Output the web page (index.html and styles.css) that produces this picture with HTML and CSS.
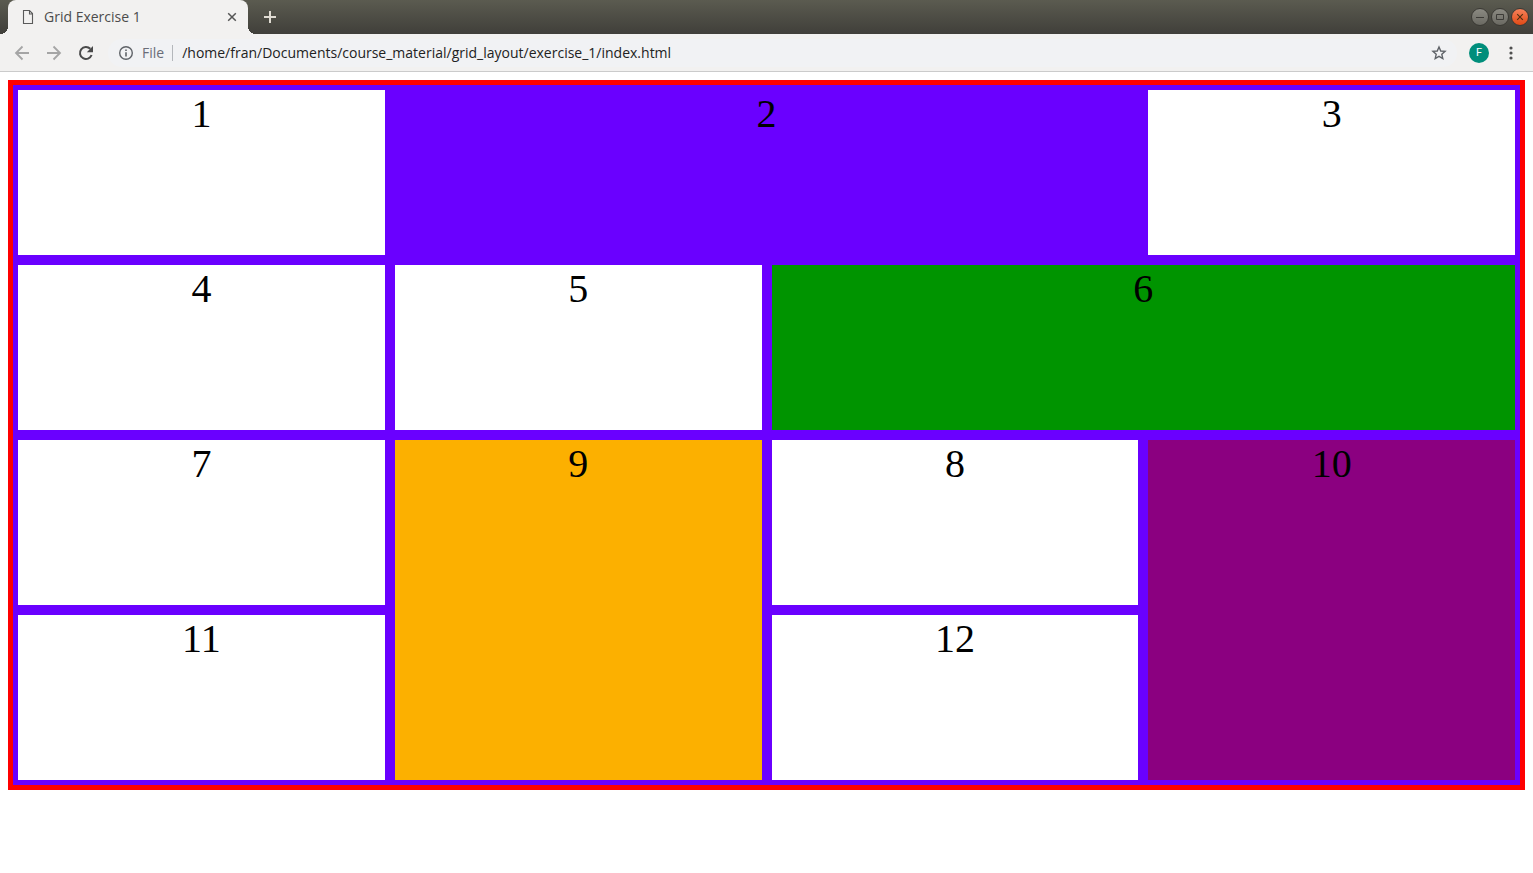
FILE: index.html
```html
<!DOCTYPE html>
<html lang="en">
<head>
<meta charset="utf-8">
<title>Grid Exercise 1</title>
<link rel="stylesheet" href="styles.css">
</head>
<body>
<header class="browser">
  <div class="titlebar">
    <div class="tab">
      <svg class="icon" width="16" height="16" viewBox="0 0 16 16" fill="none" stroke="#5a5a5a" stroke-width="1.1"><path d="M3.500 1.500h6l3 3v10h-9zM9.500 1.500v3.500h3"/></svg>
      <span class="tab-title">Grid Exercise 1</span>
      <button class="tab-close" type="button" aria-label="Close tab"><svg width="16" height="16" viewBox="0 0 16 16" stroke="#555" stroke-width="1.500"><path d="M4.200 4.200l7.600 7.600M11.800 4.200l-7.600 7.600"/></svg></button>
    </div>
    <button class="new-tab" type="button" aria-label="New tab"><svg width="16" height="16" viewBox="0 0 16 16" stroke="#dfdbd2" stroke-width="2"><path d="M2 8h12M8 2v12"/></svg></button>
    <div class="window-controls">
      <button class="window-button" type="button" aria-label="Minimize"><svg width="16" height="16" viewBox="0 0 16 16" stroke="#3c3b37"><path d="M4 8.500h8"/></svg></button>
      <button class="window-button" type="button" aria-label="Maximize"><svg width="16" height="16" viewBox="0 0 16 16" fill="none" stroke="#3c3b37"><path d="M4.500 5.500h7v5h-7z"/></svg></button>
      <button class="window-button window-button-close" type="button" aria-label="Close"><svg width="16" height="16" viewBox="0 0 16 16" stroke="#4b2f12" stroke-width="1.100"><path d="M5.200 5.200l5.600 5.600M10.800 5.200l-5.600 5.600"/></svg></button>
    </div>
  </div>
  <div class="toolbar">
    <div class="nav">
      <button class="tool" type="button" aria-label="Back"><svg width="20" height="20" viewBox="0 0 20 20" fill="none" stroke="#a5a5a5" stroke-width="1.800"><path d="M17 10H4M10.500 3.500L4 10l6.500 6.500"/></svg></button>
      <button class="tool" type="button" aria-label="Forward"><svg width="20" height="20" viewBox="0 0 20 20" fill="none" stroke="#a5a5a5" stroke-width="1.800"><path d="M3 10h13M9.500 3.500L16 10l-6.500 6.500"/></svg></button>
      <button class="tool" type="button" aria-label="Reload"><svg width="20" height="20" viewBox="0 0 20 20" fill="none" stroke="#4a4a4a" stroke-width="2"><path d="M15.600 12A6 6 0 1 1 14.300 5.800"/><path d="M17 3v6.200h-6.200z" fill="#4a4a4a" stroke="none"/></svg></button>
    </div>
    <div class="address">
      <svg class="icon" width="16" height="16" viewBox="0 0 16 16" fill="none" stroke="#5f6368"><circle cx="8" cy="8" r="6.300" stroke-width="1.400"/><path d="M8 7.200v4.300M8 4.400v1.600" stroke-width="1.600"/></svg>
      <label class="scheme" for="url">File</label>
      <input class="url" id="url" type="text" value="/home/fran/Documents/course_material/grid_layout/exercise_1/index.html">
      <button class="star" type="button" aria-label="Bookmark this page"><svg width="16" height="16" viewBox="0 0 16 16" fill="none" stroke="#5f6368" stroke-width="1.400"><path d="M8 2l1.750 4 4.350.400-3.300 2.900 1 4.300L8 11.300l-3.800 2.300 1-4.300-3.300-2.900L6.250 6z"/></svg></button>
    </div>
    <button class="avatar" type="button" aria-label="Profile">F</button>
    <button class="menu" type="button" aria-label="Menu"><svg width="16" height="16" viewBox="0 0 16 16" fill="#4f4f4f"><circle cx="8" cy="3" r="1.600"/><circle cx="8" cy="8" r="1.600"/><circle cx="8" cy="13" r="1.600"/></svg></button>
  </div>
</header>
<main class="container">
  <div class="item">1</div>
  <div class="item item-2">2</div>
  <div class="item">3</div>
  <div class="item">4</div>
  <div class="item">5</div>
  <div class="item item-6">6</div>
  <div class="item">7</div>
  <div class="item item-9">9</div>
  <div class="item">8</div>
  <div class="item item-10">10</div>
  <div class="item">11</div>
  <div class="item">12</div>
</main>
</body>
</html>
```
FILE: styles.css
```css
* {
  box-sizing: border-box;
}

body {
  margin: 0;
  background: #fff;
  font-family: "Liberation Serif", serif;
}

button {
  display: flex;
  align-items: center;
  justify-content: center;
  padding: 0;
  border: 0;
  background: none;
}

.browser {
  font-family: "Open Sans", sans-serif;
  font-size: 14px;
}

.titlebar {
  display: flex;
  align-items: center;
  height: 34px;
  padding: 0 4px 0 8px;
  background: linear-gradient(#5b5b50, #403f3a);
}

.tab {
  position: relative;
  display: flex;
  align-items: center;
  width: 240px;
  height: 34px;
  padding: 0 8px 0 12px;
  border-radius: 8px 8px 0 0;
  background: #f2f1f0;
}

.tab::before,
.tab::after {
  content: "";
  position: absolute;
  bottom: 0;
  width: 8px;
  height: 8px;
}

.tab::before {
  right: 100%;
  background: radial-gradient(circle at 0 0, transparent 8px, #f2f1f0 8px);
}

.tab::after {
  left: 100%;
  background: radial-gradient(circle at 100% 0, transparent 8px, #f2f1f0 8px);
}

.icon {
  flex: none;
}

.tab-title {
  flex: 1;
  margin-left: 8px;
  color: #4c4c4c;
  line-height: 16px;
}

.new-tab {
  margin-left: 14px;
}

.window-controls {
  display: flex;
  gap: 2px;
  margin-left: auto;
}

.window-button {
  width: 18px;
  height: 18px;
  border: 1px solid #3a3934;
  border-radius: 50%;
  background: linear-gradient(#8b8a82, #6a6962);
}

.window-button-close {
  background: linear-gradient(#f5815a, #e04a16);
}

.toolbar {
  display: flex;
  align-items: center;
  height: 38px;
  padding: 0 14px 0 8px;
  border-bottom: 1px solid #cbcbcb;
  background: #f2f1f0;
}

.nav {
  display: flex;
  gap: 4px;
}

.tool {
  width: 28px;
  height: 28px;
}

.address {
  display: flex;
  flex: 1;
  align-items: center;
  height: 28px;
  margin-left: 8px;
  padding: 0 10px;
  border-radius: 14px;
  background: #f1f2f4;
}

.scheme {
  margin-left: 8px;
  padding-right: 8px;
  border-right: 1px solid #b4b7bb;
  color: #6a6d78;
  line-height: 16px;
}

.url {
  flex: 1;
  min-width: 0;
  margin-left: 9px;
  padding: 0;
  border: 0;
  outline: 0;
  background: none;
  color: #222;
  font: inherit;
}

.avatar {
  width: 20px;
  height: 20px;
  margin-left: 12px;
  border-radius: 50%;
  background: #008e7b;
  color: #fff;
  font-family: Roboto, sans-serif;
  font-size: 11px;
}

.menu {
  width: 16px;
  margin-left: 14px;
}

.container {
  display: grid;
  grid-template-columns: repeat(4, 1fr);
  grid-auto-rows: 175px;
  margin: 8px;
  border: 5px solid #f00;
}

.item {
  border: 5px solid #6a00ff;
  font-size: 40px;
  text-align: center;
}

.item-2 {
  grid-column: span 2;
  background: #6a00ff;
}

.item-6 {
  grid-column: span 2;
  background: #009400;
}

.item-9 {
  grid-row: span 2;
  background: #fcb000;
}

.item-10 {
  grid-row: span 2;
  background: #8b0080;
}
```
